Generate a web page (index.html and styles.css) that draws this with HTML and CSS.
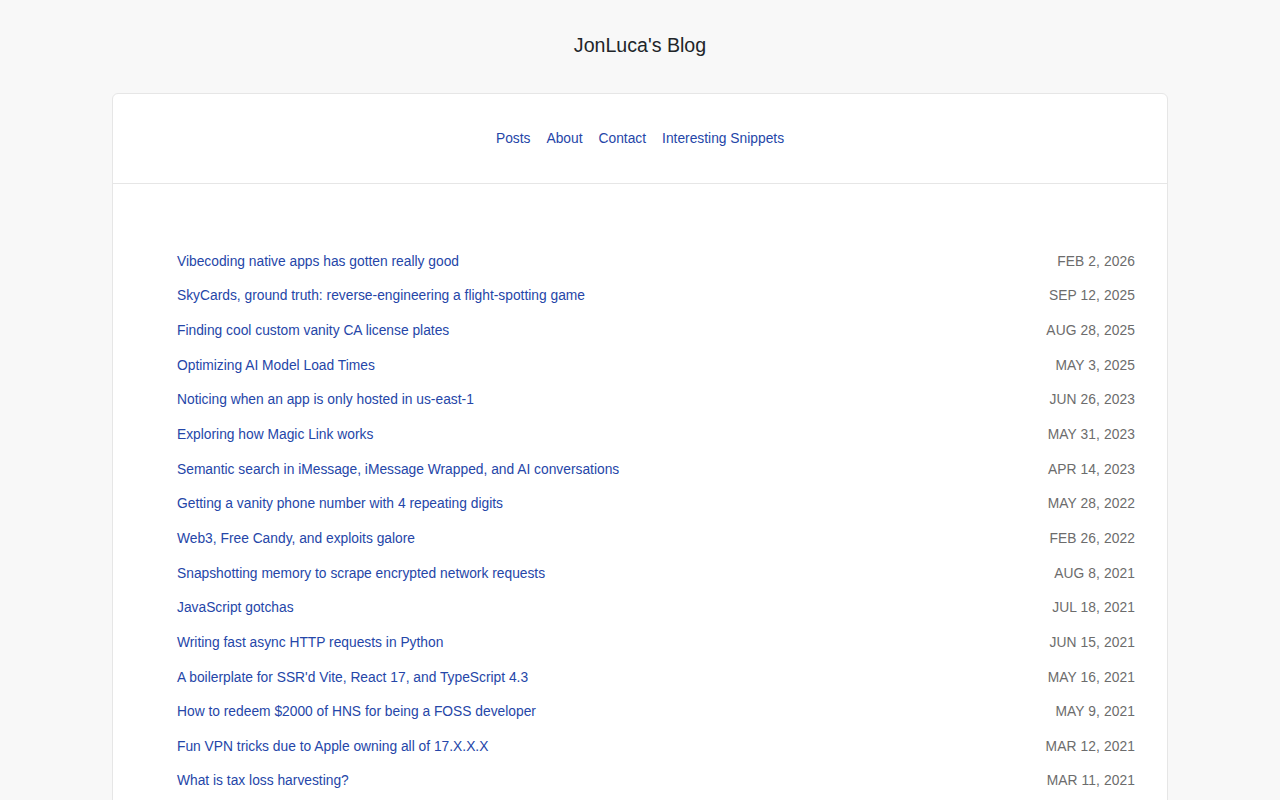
FILE: index.html
```html
<!DOCTYPE html>
<html lang="en">
<head>
<meta charset="utf-8">
<title>JonLuca's Blog</title>
<link rel="stylesheet" href="styles.css">
</head>
<body>
<header class="site-header">
  <h1 class="site-title">JonLuca's Blog</h1>
</header>
<main class="card">
  <nav class="card-nav">
    <a href="#">Posts</a>
    <a href="#">About</a>
    <a href="#">Contact</a>
    <a href="#">Interesting Snippets</a>
  </nav>
  <section class="card-body">
    <ul class="posts">
      <li><a href="#">Vibecoding native apps has gotten really good</a><span class="date">Feb 2, 2026</span></li>
      <li><a href="#">SkyCards, ground truth: reverse-engineering a flight-spotting game</a><span class="date">Sep 12, 2025</span></li>
      <li><a href="#">Finding cool custom vanity CA license plates</a><span class="date">Aug 28, 2025</span></li>
      <li><a href="#">Optimizing AI Model Load Times</a><span class="date">May 3, 2025</span></li>
      <li><a href="#">Noticing when an app is only hosted in us-east-1</a><span class="date">Jun 26, 2023</span></li>
      <li><a href="#">Exploring how Magic Link works</a><span class="date">May 31, 2023</span></li>
      <li><a href="#">Semantic search in iMessage, iMessage Wrapped, and AI conversations</a><span class="date">Apr 14, 2023</span></li>
      <li><a href="#">Getting a vanity phone number with 4 repeating digits</a><span class="date">May 28, 2022</span></li>
      <li><a href="#">Web3, Free Candy, and exploits galore</a><span class="date">Feb 26, 2022</span></li>
      <li><a href="#">Snapshotting memory to scrape encrypted network requests</a><span class="date">Aug 8, 2021</span></li>
      <li><a href="#">JavaScript gotchas</a><span class="date">Jul 18, 2021</span></li>
      <li><a href="#">Writing fast async HTTP requests in Python</a><span class="date">Jun 15, 2021</span></li>
      <li><a href="#">A boilerplate for SSR'd Vite, React 17, and TypeScript 4.3</a><span class="date">May 16, 2021</span></li>
      <li><a href="#">How to redeem $2000 of HNS for being a FOSS developer</a><span class="date">May 9, 2021</span></li>
      <li><a href="#">Fun VPN tricks due to Apple owning all of 17.X.X.X</a><span class="date">Mar 12, 2021</span></li>
      <li><a href="#">What is tax loss harvesting?</a><span class="date">Mar 11, 2021</span></li>
    </ul>
  </section>
</main>
</body>
</html>
```

FILE: styles.css
```css
html, body {
  margin: 0;
  padding: 0;
}
body {
  background: #f8f8f8;
  font-family: "Liberation Sans", Arial, sans-serif;
  color: #212529;
  font-size: 13.8px;
}
.site-header {
  display: flex;
  justify-content: center;
  padding: 33px 0 0;
  height: 60px;
}
.site-title {
  margin: 0;
  font-size: 19.6px;
  font-weight: 400;
  line-height: 24px;
  color: #212529;
}
.card {
  margin: 0 112px;
  background: #fff;
  border: 1px solid #e6e6e6;
  border-radius: 6px;
  min-height: 720px;
}
.card-nav {
  display: flex;
  justify-content: center;
  gap: 16px;
  padding: 36px 0 36px;
  line-height: 17px;
  border-bottom: 1px solid #e6e6e6;
}
.card-nav a,
.posts a {
  color: #2546a8;
  text-decoration: none;
}
.card-body {
  padding: 60px 32px 0 64px;
}
.posts {
  list-style: none;
  margin: 0;
  padding: 0;
}
.posts li {
  display: flex;
  justify-content: space-between;
  align-items: center;
  height: 34.65px;
}
.date {
  color: #6c6c6c;
  text-transform: uppercase;
  letter-spacing: 0.1px;
}
```
